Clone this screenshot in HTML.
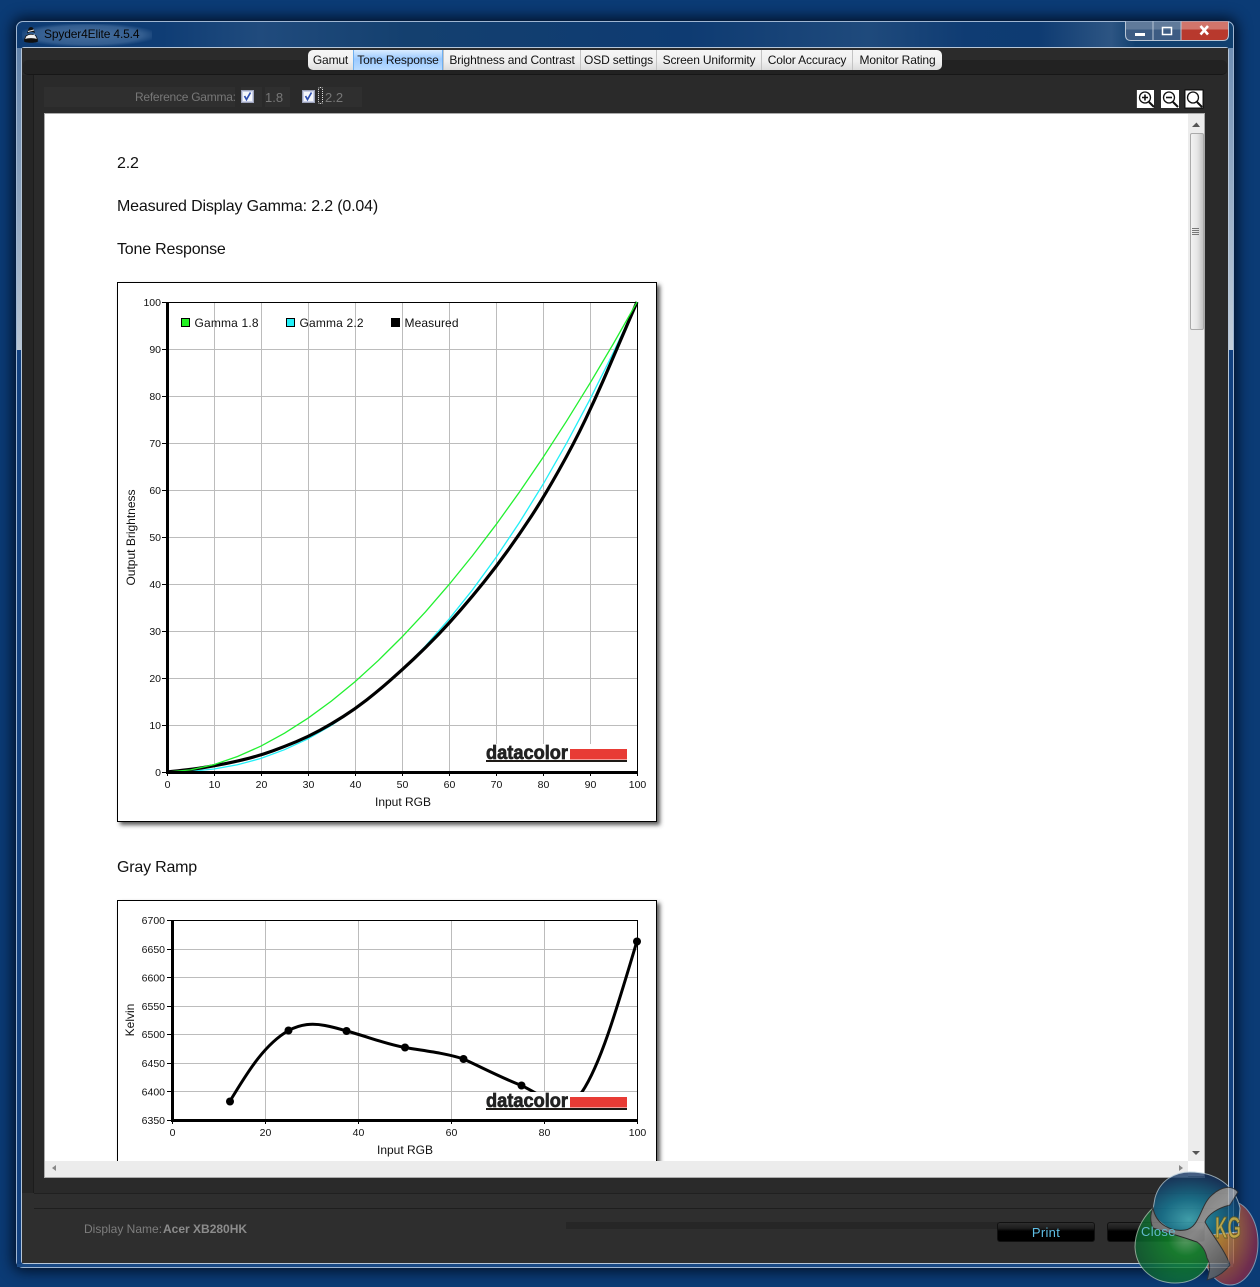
<!DOCTYPE html>
<html><head><meta charset="utf-8"><title>Spyder4Elite</title>
<style>
html,body{margin:0;padding:0;width:1260px;height:1287px;overflow:hidden;background:#0b3b75;font-family:"Liberation Sans",sans-serif}
div{position:absolute;box-sizing:border-box}
.tab{top:50px;height:20px;font-size:12px;line-height:20px;text-align:center;color:#111;background:linear-gradient(#f6f6f6,#f0f0f0 55%,#dcdcdc);border-left:1px solid #c4c4c4;white-space:nowrap;letter-spacing:-.15px}
.h{left:117px;font-size:16px;line-height:20px;color:#111;white-space:nowrap;letter-spacing:-.17px}
.lab{font-size:12px;color:#777;white-space:nowrap;line-height:14px}
.btn{top:1222px;height:20px;width:98px;border:1px solid #111;border-radius:3px;background:linear-gradient(#2e2e2e,#1d1d1d 30%,#000 45%,#000);color:#5fbfe6;font-size:13px;line-height:19px;text-align:center;letter-spacing:.3px}
svg{position:absolute;left:0;top:0}
svg text{font-family:"Liberation Sans",sans-serif;fill:#111}
</style></head><body>
<div style="left:16px;top:21px;width:1218px;height:1247px;border-radius:7px;box-shadow:0 0 14px 3px #020f24;background:linear-gradient(90deg,#0e3c74 0,#0f3d75 12%,#204b7d 20%,#14406f 32%,#0e3b72 55%,#1f4a7c 70%,#0f3c73 78%,#0e3b72 84%,#2d5583 90%,#11406f 92%);border:1px solid #9fb6d2"></div>
<div style="left:22px;top:24px;width:130px;height:22px;background:radial-gradient(ellipse at center,rgba(120,155,195,.55),rgba(120,155,195,.35) 60%,rgba(120,155,195,0) 78%)"></div>
<div style="left:17px;top:48px;width:5px;height:302px;background:linear-gradient(#5f80a8,#b9c6d4)"></div>
<div style="left:1229px;top:48px;width:4px;height:302px;background:linear-gradient(#6f8eb3,#c4cfda)"></div>
<div style="left:17px;top:350px;width:5px;height:917px;background:#124180"></div>
<div style="left:1229px;top:350px;width:4px;height:917px;background:#124180"></div>
<div style="left:17px;top:1264px;width:1216px;height:3px;background:#1a4a86"></div>
<div style="left:21px;top:47px;width:1208px;height:1217px;border:1px solid #b6c6d8;border-radius:3px;background:#2a2a2a"></div>
<div style="left:22px;top:48px;width:1206px;height:12px;background:#2b2b2b"></div>
<div style="left:23px;top:60px;width:1204px;height:15px;background:#222;border-radius:5px;border-bottom:1px solid #171717"></div>
<div style="left:22px;top:75px;width:12px;height:1118px;background:#252525;border-right:1px solid #1c1c1c"></div>
<div style="left:22px;top:1193px;width:1206px;height:70px;background:#2e2e2e"></div>
<div style="left:34px;top:1193px;width:1194px;height:1px;background:#202020"></div>
<div style="left:34px;top:1208px;width:1194px;height:1px;background:#1e1e1e"></div>
<div style="left:44px;top:87px;width:191px;height:20px;background:#2f2f2f"></div>
<div style="left:241px;top:87px;width:21px;height:20px;background:#2f2f2f"></div>
<div style="left:265px;top:87px;width:25px;height:20px;background:#2f2f2f"></div>
<div style="left:322px;top:87px;width:40px;height:20px;background:#2f2f2f"></div>

<div style="left:44px;top:27px;font-size:12px;line-height:15px;color:#050505;letter-spacing:-.15px;white-space:nowrap">Spyder4Elite 4.5.4</div>

<div class="tab" style="left:308px;width:45px;border-radius:5px 0 0 5px;border-left:0">Gamut</div>
<div class="tab" style="left:353px;width:90px;background:linear-gradient(#d9ecff,#9ccaff 45%,#b9dbff);border-left:1px solid #6fb0f0;border-right:1px solid #6fb0f0">Tone Response</div>
<div class="tab" style="left:443px;width:137px">Brightness and Contrast</div>
<div class="tab" style="left:580px;width:76px">OSD settings</div>
<div class="tab" style="left:656px;width:105px">Screen Uniformity</div>
<div class="tab" style="left:761px;width:91px">Color Accuracy</div>
<div class="tab" style="left:852px;width:90px;border-radius:0 5px 5px 0">Monitor Rating</div>

<div class="lab" style="left:135px;top:90px;letter-spacing:-.25px">Reference Gamma:</div>
<div class="lab" style="left:265px;top:91px;font-size:13px">1.8</div>
<div class="lab" style="left:325px;top:91px;font-size:13px">2.2</div>
<div style="left:318px;top:87px;width:5px;height:17px;border:1px dotted #ddd;border-radius:2px"></div>

<!-- report -->
<div style="left:44px;top:113px;width:1161px;height:1065px;background:#fff;border:1px solid #aaa;border-width:1px 1px 2px 1px"></div>
<div style="left:45px;top:1161px;width:1143px;height:16px;background:#ececec"></div>
<div style="left:1188px;top:114px;width:16px;height:1047px;background:#ececec"></div>
<div style="left:1190px;top:133px;width:14px;height:197px;background:linear-gradient(90deg,#f2f2f2,#e6e6e6 50%,#c4c4c4);border:1px solid #aaa;border-radius:2px"></div>
<div class="h" style="top:154px">2.2</div>
<div class="h" style="top:197px">Measured Display Gamma: 2.2 (0.04)</div>
<div class="h" style="top:240px;letter-spacing:-.2px">Tone Response</div>
<div class="h" style="top:858px;letter-spacing:-.2px">Gray Ramp</div>

<svg width="1260" height="1287" viewBox="0 0 1260 1287">
<defs>
<clipPath id="rep"><rect x="45" y="114" width="1143" height="1047"/></clipPath>
<filter id="ds" x="-5%" y="-5%" width="112%" height="112%"><feDropShadow dx="3" dy="3" stdDeviation="2.2" flood-color="#444" flood-opacity=".9"/></filter>
<radialGradient id="gb" cx=".42" cy=".72" r=".7"><stop offset="0" stop-color="#45bccb"/><stop offset=".45" stop-color="#157d9c"/><stop offset="1" stop-color="#12305f"/></radialGradient>
<radialGradient id="gg" cx=".68" cy=".4" r=".8"><stop offset="0" stop-color="#6cbc78"/><stop offset=".3" stop-color="#12902f"/><stop offset="1" stop-color="#0c5a35"/></radialGradient>
<radialGradient id="gr" cx=".25" cy=".35" r=".95"><stop offset="0" stop-color="#d9a532"/><stop offset=".4" stop-color="#b36a3a"/><stop offset=".75" stop-color="#8c2a45"/><stop offset="1" stop-color="#6a2a55"/></radialGradient>
<linearGradient id="gs" x1="0" y1="0" x2="1" y2="1"><stop offset="0" stop-color="#6f6f6f"/><stop offset=".5" stop-color="#adadad"/><stop offset="1" stop-color="#4a4a4a"/></linearGradient>
</defs>
<!-- spider icon -->
<g>
<path d="M24 40.500Q31 35.500 38 40.500Q39 42.500 31 42.800Q23 42.500 24 40.500Z" fill="#111"/>
<path d="M26 36Q31 32.500 36 36L37.500 39.500Q31 37.500 24.500 39.500Z" fill="#efefef" stroke="#111" stroke-width=".8"/>
<path d="M27 33.500Q31 30.500 35 33L33.200 28Q31 26 28.800 28Z" fill="#111"/>
<path d="M28 31.500L34 30M27 36.500L35 35" stroke="#f0f0f0" stroke-width="1"/>
</g>
<!-- window buttons -->
<g>
<path d="M1125.500 21.500H1153V40H1131Q1125.500 40 1125.500 35Z" fill="#3d5c83"/>
<rect x="1125.500" y="21.500" width="27.500" height="8" fill="#7d93ad" opacity=".55"/>
<rect x="1153" y="21.500" width="28" height="18.500" fill="#3d5c83"/>
<rect x="1153" y="21.500" width="28" height="8" fill="#7d93ad" opacity=".55"/>
<path d="M1181 21.500H1228V35Q1228 40 1223 40H1181Z" fill="#b8392d"/>
<rect x="1181" y="21.500" width="47" height="8" fill="#d98a80" opacity=".75"/>
<path d="M1125.500 21.500V35Q1125.500 40.500 1131 40.500H1223Q1228.500 40.500 1228.500 35V21.500M1153 21.500V40M1181 21.500V40" fill="none" stroke="#b9c6d6" stroke-width="1"/>
<rect x="1135" y="33" width="10" height="3" fill="#fff"/>
<rect x="1162.500" y="27.500" width="9" height="7" fill="none" stroke="#fff" stroke-width="1.500"/>
<path d="M1200.500 26L1208 34.500M1208 26L1200.500 34.500" stroke="#fff" stroke-width="2.600"/>
</g>
<!-- magnifier buttons -->
<g fill="none">
<rect x="1136" y="90" width="18" height="18" fill="#fff"/>
<rect x="1136" y="90" width="1" height="18" fill="#444"/>
<circle cx="1145" cy="97.500" r="5.500" stroke="#111" stroke-width="1.300"/>
<path d="M1149 102L1154 107" stroke="#111" stroke-width="2"/>
<path d="M1142 97.500H1148M1145 94.500V100.500" stroke="#111" stroke-width="1.600"/>
<rect x="1161" y="90" width="18" height="18" fill="#fff"/>
<circle cx="1169" cy="97.500" r="5.500" stroke="#111" stroke-width="1.300"/>
<path d="M1173 102L1178 107" stroke="#111" stroke-width="2"/>
<path d="M1166 97.500H1172" stroke="#111" stroke-width="1.600"/>
<rect x="1184" y="89" width="20" height="20" rx="2" fill="#161616"/>
<rect x="1185.500" y="90.500" width="17" height="17" fill="#fff"/>
<circle cx="1193" cy="97.500" r="5.500" stroke="#111" stroke-width="1.300"/>
<path d="M1197 102L1202 107" stroke="#111" stroke-width="2"/>
</g>
<!-- checkboxes -->
<g>
<rect x="241.500" y="90.500" width="12" height="12" fill="#c9cfe6" stroke="#9da3bb"/>
<rect x="243" y="92" width="9" height="9" fill="#f4f6fb"/>
<path d="M244.500 96L246.500 99.500L250.500 92.500" fill="none" stroke="#2f4fb0" stroke-width="1.700"/>
<rect x="302.500" y="90.500" width="12" height="12" fill="#c9cfe6" stroke="#9da3bb"/>
<rect x="304" y="92" width="9" height="9" fill="#f4f6fb"/>
<path d="M305.500 96L307.500 99.500L311.500 92.500" fill="none" stroke="#2f4fb0" stroke-width="1.700"/>
</g>
<!-- scroll arrows -->
<path d="M1192 127L1196.500 122.500L1200 127Z" fill="#555"/>
<path d="M1192 1151H1200L1196 1155Z" fill="#555"/>
<path d="M56 1165V1171L52 1168Z" fill="#888"/>
<path d="M1179 1165V1171L1183 1168Z" fill="#888"/>
<path d="M1192 228.500H1199M1192 230.500H1199M1192 232.500H1199M1192 234.500H1199" stroke="#777" stroke-width="1" fill="none"/>

<g clip-path="url(#rep)">
<!-- chart 1 -->
<rect x="117.500" y="282.500" width="539" height="539" fill="#fff" stroke="#000" filter="url(#ds)"/>
<g stroke="#bcbcbc" stroke-width="1" fill="none" shape-rendering="crispEdges">
<path d="M214.500 302V776M261.500 302V776M308.500 302V776M355.500 302V776M402.500 302V776M449.500 302V776M496.500 302V776M543.500 302V776M590.500 302V776"/>
<path d="M168 349.500H637M168 396.500H637M168 443.500H637M168 490.500H637M168 537.500H637M168 584.500H637M168 631.500H637M168 678.500H637M168 725.500H637"/>
</g>
<g stroke="#000" fill="none" shape-rendering="crispEdges">
<path d="M162 302.500H637.500V772M162 349.500H166M162 396.500H166M162 443.500H166M162 490.500H166M162 537.500H166M162 584.500H166M162 631.500H166M162 678.500H166M162 725.500H166M162 772.500H166"/>
<path d="M167.500 772V776M214.500 772V776M261.500 772V776M308.500 772V776M355.500 772V776M402.500 772V776M449.500 772V776M496.500 772V776M543.500 772V776M590.500 772V776M637.500 772V776"/>
</g>
<polyline fill="none" stroke="#22f0f8" stroke-width="1.300" points="167,772 190.500,771.400 214,769 237.500,764.800 261,758.400 284.500,749.700 308,738.800 331.500,725.300 355,709.400 378.500,690.900 402,669.700 425.500,645.900 449,619.200 472.500,589.800 496,557.500 519.500,522.400 543,484.400 566.500,443.300 590,399.300 613.500,352.200 637,302"/>
<path fill="none" stroke="#000" stroke-width="3.200" d="M167 772Q190.500 769.600 202.250 767.750Q214 765.900 225.750 763.550Q237.500 761.200 249.250 758.150Q261 755.100 272.750 750.850Q284.500 746.600 296.250 741.700Q308 736.800 319.750 730.400Q331.500 724 343.250 716.500Q355 709 366.750 699.850Q378.500 690.700 390.250 680.350Q402 670 413.750 658.950Q425.500 647.900 437.250 635.700Q449 623.500 460.750 609.850Q472.500 596.200 484.250 581.600Q496 567 507.750 550.600Q519.500 534.200 531.250 516.350Q543 498.500 558.500 471Q574 443.500 585.300 419.750Q596.600 396 606.700 372.500Q616.800 349 626.900 325.500L637 302"/>
<polyline fill="none" stroke="#22f030" stroke-width="1.300" points="167,772 190.500,769.900 214,764.600 237.500,756.500 261,746.100 284.500,733.200 308,718.200 331.500,701 355,681.700 378.500,660.300 402,637 425.500,611.800 449,584.600 472.500,555.600 496,524.700 519.500,492 543,457.500 566.500,421.200 590,383.200 613.500,343.500 637,302"/>
<rect x="166" y="302" width="3" height="472" fill="#000"/>
<rect x="166" y="771" width="472" height="3" fill="#000"/>
<g font-size="10.500" text-anchor="end">
<text x="161" y="306">100</text><text x="161" y="353">90</text><text x="161" y="400">80</text><text x="161" y="447">70</text><text x="161" y="494">60</text><text x="161" y="541">50</text><text x="161" y="588">40</text><text x="161" y="635">30</text><text x="161" y="682">20</text><text x="161" y="729">10</text><text x="161" y="776">0</text>
</g>
<g font-size="10.500" text-anchor="middle">
<text x="167.500" y="788">0</text><text x="214.500" y="788">10</text><text x="261.500" y="788">20</text><text x="308.500" y="788">30</text><text x="355.500" y="788">40</text><text x="402.500" y="788">50</text><text x="449.500" y="788">60</text><text x="496.500" y="788">70</text><text x="543.500" y="788">80</text><text x="590.500" y="788">90</text><text x="637.500" y="788">100</text>
</g>
<text x="403" y="806" font-size="12" text-anchor="middle">Input RGB</text>
<text transform="translate(135,537.500) rotate(-90)" font-size="12" text-anchor="middle">Output Brightness</text>
<!-- legend -->
<rect x="181.500" y="318.500" width="8" height="8" fill="#22f020" stroke="#000"/>
<text x="194.500" y="327" font-size="12" textLength="64">Gamma 1.8</text>
<rect x="286.500" y="318.500" width="8" height="8" fill="#22f0f8" stroke="#000"/>
<text x="299.500" y="327" font-size="12" textLength="64">Gamma 2.2</text>
<rect x="391" y="318" width="9" height="9" fill="#000"/>
<text x="404.500" y="327" font-size="12" textLength="54">Measured</text>
<!-- logo 1 -->
<rect x="482" y="744" width="146" height="27" fill="#fff"/>
<text x="486" y="759" font-size="19.500" font-weight="700" textLength="82" lengthAdjust="spacingAndGlyphs" style="fill:#222;stroke:#222;stroke-width:.7px">datacolor</text>
<rect x="570" y="749" width="57" height="10.500" fill="#e83b35"/>
<rect x="486" y="760" width="141" height="2" fill="#1e1a16"/>

<!-- chart 2 -->
<rect x="117.500" y="900.500" width="539" height="300" fill="#fff" stroke="#000" filter="url(#ds)"/>
<g stroke="#bcbcbc" stroke-width="1" fill="none" shape-rendering="crispEdges">
<path d="M265.500 920V1124M358.500 920V1124M451.500 920V1124M544.500 920V1124"/>
<path d="M172 949.500H637M172 977.500H637M172 1006.500H637M172 1034.500H637M172 1063.500H637M172 1091.500H637"/>
</g>
<g stroke="#000" fill="none" shape-rendering="crispEdges">
<path d="M167 920.500H637.500V1120M167 949.500H171M167 977.500H171M167 1006.500H171M167 1034.500H171M167 1063.500H171M167 1091.500H171M167 1120.500H171"/>
<path d="M172.500 1120V1124M265.500 1120V1124M358.500 1120V1124M451.500 1120V1124M544.500 1120V1124M637.500 1120V1124"/>
</g>
<path d="M230 1101C245 1077 262 1046 288.500 1030.500C301 1024 312 1023 325 1025.500C333 1027 340 1029 346.500 1031C366 1036 385 1044 405 1047.500C425 1051 445 1053 463.500 1059C483 1068 502 1078 521.500 1085.500C531 1090 540 1096 548 1100C560 1104 572 1102 582 1092C600 1065 615 1015 637 941" fill="none" stroke="#000" stroke-width="3"/>
<g fill="#000"><circle cx="230" cy="1101.500" r="4"/><circle cx="288.500" cy="1030.500" r="4"/><circle cx="346.500" cy="1031" r="4"/><circle cx="405" cy="1047.500" r="4"/><circle cx="463.500" cy="1059" r="4"/><circle cx="521.500" cy="1085.500" r="4"/><circle cx="637" cy="941.500" r="4"/></g>
<rect x="171" y="920" width="3" height="202" fill="#000"/>
<rect x="171" y="1119" width="467" height="3" fill="#000"/>
<g font-size="10.500" text-anchor="end">
<text x="165" y="924">6700</text><text x="165" y="953">6650</text><text x="165" y="981.500">6600</text><text x="165" y="1010">6550</text><text x="165" y="1038">6500</text><text x="165" y="1067">6450</text><text x="165" y="1095.500">6400</text><text x="165" y="1124">6350</text>
</g>
<g font-size="10.500" text-anchor="middle">
<text x="172.500" y="1136">0</text><text x="265.500" y="1136">20</text><text x="358.500" y="1136">40</text><text x="451.500" y="1136">60</text><text x="544.500" y="1136">80</text><text x="637.500" y="1136">100</text>
</g>
<text x="405" y="1154" font-size="12" text-anchor="middle">Input RGB</text>
<text transform="translate(134,1020) rotate(-90)" font-size="12" text-anchor="middle">Kelvin</text>
<rect x="482" y="1092" width="146" height="27" fill="#fff"/>
<text x="486" y="1107" font-size="19.500" font-weight="700" textLength="82" lengthAdjust="spacingAndGlyphs" style="fill:#222;stroke:#222;stroke-width:.7px">datacolor</text>
<rect x="570" y="1097" width="57" height="10.500" fill="#e83b35"/>
<rect x="486" y="1108" width="141" height="2" fill="#1e1a16"/>
</g>
</svg>

<div style="left:566px;top:1222px;width:432px;height:7px;background:#262626"></div>
<div class="lab" style="left:84px;top:1222px;color:#7d7d7d">Display Name:</div>
<div class="lab" style="left:163px;top:1222px;color:#8c8c8c;font-weight:700">Acer XB280HK</div>
<div class="btn" style="left:997px">Print</div>
<div class="btn" style="left:1107px"></div>

<!-- KG logo overlay -->
<svg width="1260" height="1287" viewBox="0 0 1260 1287">
<g opacity=".78">
<ellipse cx="1230" cy="1243" rx="28" ry="42" fill="url(#gr)" stroke="#9fb0c0" stroke-width="1"/>
<path d="M1155 1198C1160 1180 1175 1172 1190 1172C1215 1172 1235 1185 1240 1208L1238 1232L1180 1238L1152 1215Z" fill="url(#gb)" stroke="#b0c8d6" stroke-width="1"/>
<path d="M1153 1208C1140 1220 1135 1235 1135 1247C1136 1270 1155 1283 1175 1283C1195 1283 1207 1272 1210 1258L1207 1245L1175 1230L1153 1226Z" fill="url(#gg)" stroke="#a8c8b0" stroke-width="1"/>
<path d="M1153 1208C1156 1225 1172 1232 1185 1230C1200 1228 1200 1205 1212 1195C1222 1186 1232 1185 1238 1192L1230 1205C1218 1208 1208 1214 1205 1222C1212 1235 1225 1250 1230 1265C1222 1275 1214 1278 1207 1280C1210 1270 1211 1265 1207 1258C1205 1248 1200 1244 1197 1242C1180 1236 1165 1232 1153 1228C1150 1222 1150 1214 1153 1208Z" fill="url(#gs)" stroke="#333" stroke-width="1"/>
</g>
<text x="1215" y="1238" font-size="31" font-weight="700" textLength="26" lengthAdjust="spacingAndGlyphs" style="font-family:'Liberation Sans',sans-serif;fill:#c9ae48;stroke:#5e5a2a;stroke-width:1px;opacity:.9">KG</text>
</svg>
<div style="left:1141px;top:1222px;font-size:13px;line-height:19px;letter-spacing:.3px;color:#62b9cc;white-space:nowrap">Close</div>
</body></html>
